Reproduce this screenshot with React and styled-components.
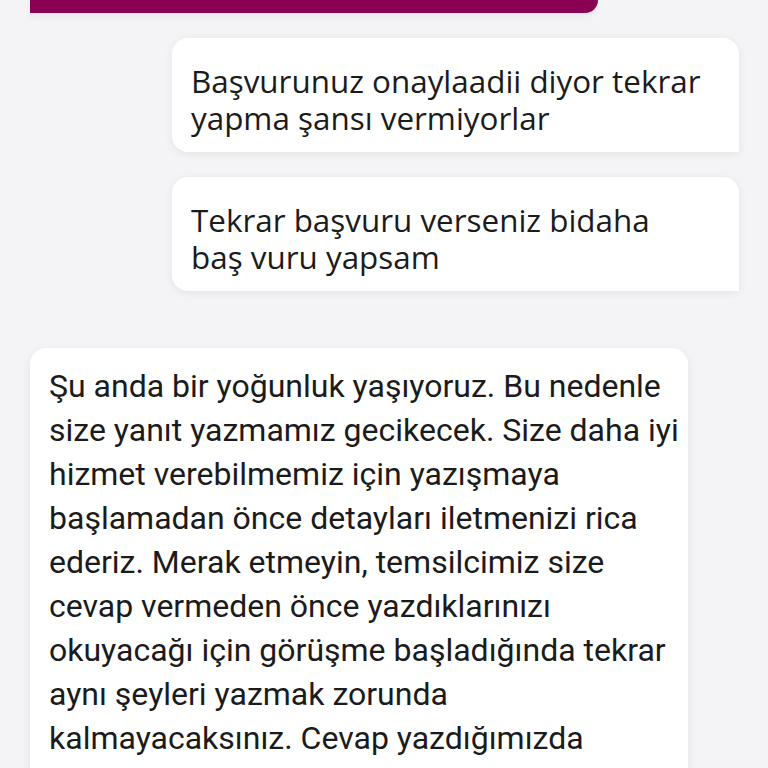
import styled, { createGlobalStyle } from "styled-components"

const GlobalStyle = createGlobalStyle`
  html, body {
    margin: 0;
    padding: 0;
    background: #f4f4f6;
    overflow: hidden;
  }
`

const messages = [
  { from: "user", lines: ["Başvurunuz onaylaadii diyor tekrar", "yapma şansı vermiyorlar"] },
  { from: "user", lines: ["Tekrar başvuru verseniz bidaha", "baş vuru yapsam"] },
  {
    from: "agent",
    lines: [
      "Şu anda bir yoğunluk yaşıyoruz. Bu nedenle",
      "size yanıt yazmamız gecikecek. Size daha iyi",
      "hizmet verebilmemiz için yazışmaya",
      "başlamadan önce detayları iletmenizi rica",
      "ederiz. Merak etmeyin, temsilcimiz size",
      "cevap vermeden önce yazdıklarınızı",
      "okuyacağı için görüşme başladığında tekrar",
      "aynı şeyleri yazmak zorunda",
      "kalmayacaksınız. Cevap yazdığımızda",
    ],
  },
]

export default function App() {
  return (
    <>
      <GlobalStyle />
      <Thread>
        <TopBubble />
        {messages.map((m, i) => (
          <Bubble key={i} $from={m.from}>
            {m.lines.map((l, j) => (
              <Line key={j}>{l}</Line>
            ))}
          </Bubble>
        ))}
      </Thread>
    </>
  )
}

const Thread = styled.div`
  display: flex;
  flex-direction: column;
  padding: 0 29px 0 30px;
  height: 768px;
  overflow: hidden;
  & > * {
    flex-shrink: 0;
  }
`

const TopBubble = styled.div`
  align-self: flex-start;
  width: 568px;
  height: 13px;
  background: #8a0052;
  border-radius: 0 0 14px 0;
  box-shadow: 0 3px 8px rgba(0, 0, 0, 0.06);
`

const Bubble = styled.div`
  background: #ffffff;
  color: #1b1b1b;
  box-sizing: border-box;
  box-shadow: 0 2px 10px rgba(0, 0, 0, 0.07);
  ${({ $from }) =>
    $from === "user"
      ? `
    align-self: flex-end;
    width: 567px;
    margin-top: 25px;
    padding: 24px 19px 16px;
    border-radius: 16px 16px 0 16px;
    font-family: "Open Sans", "Noto Sans", sans-serif;
    font-size: 31.4px;
    line-height: 37px;
  `
      : `
    align-self: flex-start;
    width: 658px;
    margin-top: 57px;
    padding: 16px 19px 40px;
    border-radius: 16px 16px 16px 0;
    font-family: Roboto, "Liberation Sans", sans-serif;
    font-size: 32px;
    line-height: 44px;
  `}
`

const Line = styled.div`
  white-space: nowrap;
`
